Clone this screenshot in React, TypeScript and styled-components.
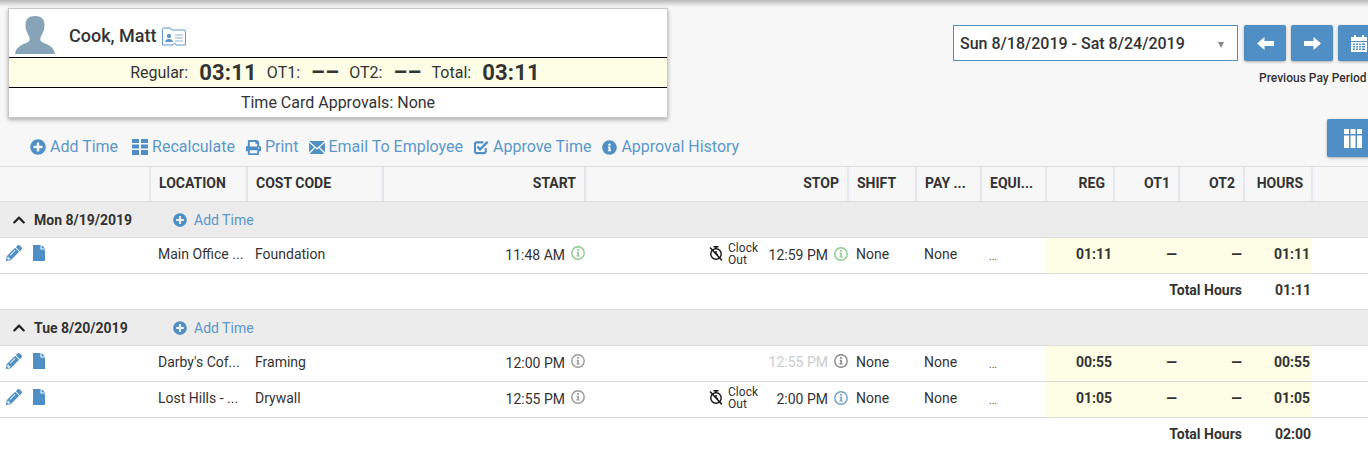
import React from 'react';
import styled, { createGlobalStyle } from 'styled-components';
import { FaPlusCircle, FaPrint, FaInfoCircle, FaPencilAlt, FaChevronUp } from 'react-icons/fa';

const Global = createGlobalStyle`
  html, body { margin: 0; padding: 0; height: 453px; overflow: hidden; background: #f7f7f7; }
  body { font-family: Roboto, "Liberation Sans", sans-serif; color: #333; font-size: 14px; }
`;

const Page = styled.div`
  width: 1368px;
  height: 453px;
  overflow: hidden;
  position: relative;
  &::before {
    content: '';
    position: absolute;
    left: 0; right: 0; top: 0; height: 7px;
    background: linear-gradient(#b8b8b8, #f7f7f7);
  }
`;

const TopBar = styled.div`
  display: flex;
  justify-content: space-between;
  padding: 8px 0 0 8px;
  height: 117px;
  box-sizing: border-box;
`;

const Card = styled.div`
  width: 660px;
  height: 110px;
  box-sizing: border-box;
  background: #fff;
  border: 1px solid #c8c8c8;
  box-shadow: 0 2px 4px rgba(0,0,0,.3);
  display: flex;
  flex-direction: column;
  position: relative;
`;

const CardHead = styled.div`
  height: 48px;
  flex: none;
  display: flex;
  align-items: flex-end;
  padding-left: 6px;
`;

const Name = styled.div`
  font-size: 18px;
  font-weight: 500;
  margin: 0 5px 9px 14px;
  line-height: 24px;
  color: #333;
`;

const IdIcon = styled.svg`
  width: 24px;
  height: 20px;
  margin-bottom: 10px;
`;

const Summary = styled.div`
  height: 31px;
  flex: none;
  box-sizing: border-box;
  background: #fefee6;
  border-top: 1px solid #000;
  border-bottom: 1px solid #000;
  display: flex;
  align-items: center;
  justify-content: center;
  font-size: 16px;
  padding-left: 4px;
`;

const SumLabel = styled.span`
  margin-right: 11px;
`;

const SumValue = styled.span`
  font-size: 22px;
  font-weight: 700;
  margin-right: 10px;
  letter-spacing: .2px;
`;

const Approvals = styled.div`
  flex: 1;
  display: flex;
  align-items: center;
  justify-content: center;
  font-size: 16px;
  padding-bottom: 1px;
`;

const Pay = styled.div`
  width: 415px;
  flex: none;
  padding-top: 17px;
  position: relative;
`;

const PayRow = styled.div`
  display: flex;
  gap: 5px;
`;

const Select = styled.div`
  width: 285px;
  height: 36px;
  flex: none;
  box-sizing: border-box;
  border: 1px solid #4f8fc6;
  background: #fff;
  display: flex;
  align-items: center;
  justify-content: space-between;
  padding: 0 13px 0 6px;
  font-size: 16px;
  font-weight: 500;
  margin-right: 1px;
`;

const Caret = styled.span`
  width: 0;
  height: 0;
  border-left: 3.5px solid transparent;
  border-right: 3.5px solid transparent;
  border-top: 6px solid #888;
  margin-top: 3px;
`;

const NavButton = styled.div`
  width: 42px;
  height: 36px;
  flex: none;
  background: #4f8fc6;
  border-radius: 2px;
  box-shadow: 0 1px 3px rgba(0,0,0,.3);
  color: #fff;
  display: flex;
  align-items: center;
  justify-content: center;
  font-size: 16px;
`;

const PrevLabel = styled.div`
  font-size: 12px;
  font-weight: 500;
  margin: 10px 0 0 306px;
  white-space: nowrap;
  line-height: 14px;
`;

const Toolbar = styled.div`
  height: 49px;
  display: flex;
  align-items: flex-start;
  justify-content: space-between;
  padding-left: 30px;
`;

const Actions = styled.div`
  display: flex;
  gap: 11px;
  margin-top: 18px;
  line-height: 24px;
  font-size: 16px;
  color: #5b97c9;
`;

const Action = styled.div<{ $shift?: number }>`
  display: flex;
  align-items: center;
  gap: 4px;
  white-space: nowrap;
  margin-left: ${p => p.$shift ?? 0}px;
  svg { fill: #4f8fc6; flex: none; }
`;

const ColumnsButton = styled.div`
  width: 52px;
  height: 38px;
  margin: 2px -11px 0 0;
  background: #4f8fc6;
  border-radius: 2px;
  box-shadow: 0 1px 3px rgba(0,0,0,.3);
  display: flex;
  align-items: center;
  padding-left: 17px;
  box-sizing: border-box;
`;

const COLS = '150px 97px 136px 202px 263px 68px 65px 65px 68px 65px 65px 68px 56px';

const HeadRow = styled.div`
  display: grid;
  grid-template-columns: ${COLS};
  height: 36px;
  box-sizing: border-box;
  border-top: 1px solid #ddd;
  border-bottom: 1px solid #ddd;
  background: #f7f7f7;
`;

const HeadCell = styled.div<{ $right?: boolean }>`
  border-right: 2px solid #e6e6ef;
  margin-right: -1px;
  box-sizing: border-box;
  font-size: 14px;
  font-weight: 700;
  line-height: 32px;
  padding: 0 8px 0 9px;
  text-align: ${p => (p.$right ? 'right' : 'left')};
  color: #333;
  white-space: nowrap;
  overflow: hidden;
`;

const Group = styled.div`
  height: 36px;
  box-sizing: border-box;
  background: #ececec;
  border-bottom: 1px solid #ddd;
  display: flex;
  align-items: center;
  padding: 0 0 0 12px;
`;

const GroupDate = styled.div`
  width: 139px;
  margin-left: 8px;
  font-weight: 700;
  font-size: 14px;
`;

const GroupAdd = styled.div`
  display: flex;
  align-items: center;
  gap: 7px;
  color: #5b97c9;
  svg { fill: #4f8fc6; }
`;

const Row = styled.div`
  display: grid;
  grid-template-columns: ${COLS};
  height: 36px;
  box-sizing: border-box;
  background: #fff;
  border-bottom: 1px solid #ddd;
`;

const Cell = styled.div<{ $hl?: boolean; $right?: boolean; $bold?: boolean; $flush?: boolean; $inset?: number }>`
  display: flex;
  align-items: flex-start;
  justify-content: ${p => (p.$right ? 'flex-end' : 'flex-start')};
  background: ${p => (p.$hl ? '#fefee6' : 'transparent')};
  font-weight: ${p => (p.$bold ? 700 : 400)};
  padding: 7px ${p => (p.$right && !p.$flush ? 2 : 0)}px 0 ${p => p.$inset ?? 8}px;
  line-height: 18px;
  white-space: nowrap;
  min-width: 0;
`;

const Tools = styled.div`
  display: flex;
  gap: 11px;
  padding: 0 0 0 6px;
  margin-top: 0;
  svg { fill: #4f8fc6; }
`;

const Dots = styled.span`
  font-size: 10px;
  line-height: 24px;
  color: #444;
`;

const TimeWrap = styled.div`
  display: flex;
  align-items: flex-start;
  gap: 6px;
  line-height: 18px;
`;

const Time = styled.span<{ $faded?: boolean }>`
  color: ${p => (p.$faded ? '#ccc' : '#333')};
  margin-top: ${p => (p.$faded ? 0 : 1)}px;
  min-width: 60px;
  text-align: right;
`;

const ClockOut = styled.div`
  display: flex;
  align-items: flex-start;
  gap: 5px;
  margin: -3px 10px 0 0;
  font-size: 12px;
  line-height: 12px;
  color: #333;
  svg { margin-top: 4px; }
`;

const Total = styled.div`
  display: grid;
  grid-template-columns: ${COLS};
  height: 36px;
  box-sizing: border-box;
  background: #fff;
  border-bottom: 1px solid #ddd;
  font-weight: 700;
`;

const TotalLabel = styled.div`
  grid-column: 1 / 12;
  text-align: right;
  padding: 7px 2px 0 0;
  line-height: 18px;
`;

const TotalValue = styled.div`
  grid-column: 12;
  text-align: right;
  padding: 7px 1px 0 0;
  line-height: 18px;
`;

const Person = () => (
  <svg width="40" height="38" viewBox="0 0 40 38" style={{ flex: 'none', marginBottom: 3 }}>
    <path fill="#87a3b8" d="M20 0c6 0 9.500 3 9.500 9 0 3-.5 5-1.500 7-1 2.500-2 4-2.500 5.500-.5 2 0 3.500 1.500 4.500 3 1.800 12 3.500 13 12H0c1-8.500 10-10.200 13-12 1.500-1 2-2.500 1.500-4.500C14 20 13 18.500 12 16c-1-2-1.500-4-1.500-7 0-6 3.500-9 9.500-9z" />
  </svg>
);

const IdCard = () => (
  <IdIcon viewBox="0 0 24 20">
    <path fill="none" stroke="#5b97c9" d="M.5 2.500a1.500 1.500 0 0 1 1.500-1.500h6l1.500 2h12a2 2 0 0 1 2 2v13h-9.500a1.500 1.500 0 0 0-3 0H.5z" />
    <circle cx="7" cy="9" r="2.200" fill="#5b97c9" />
    <path fill="#5b97c9" d="M3 15c0-2 2-3 4-3s4 1 4 3z" />
    <path stroke="#8fb4d4" d="M13 8h8M13 11h8M13 14h8" />
  </IdIcon>
);

const Recalc = () => (
  <svg width="16" height="16" viewBox="0 0 16 16">
    <path d="M0 0h7v4H0zM9 0h7v4H9zM0 5.500h7v4H0zM9 5.500h7v4H9zM0 11h7v5H0zM9 11h7v5H9z" />
  </svg>
);

const Mail = () => (
  <svg width="16" height="13" viewBox="0 0 17 14" style={{ marginRight: -1 }}>
    <path d="M0 0h17L8.500 7.500zM0 1.800v10.400L5.500 6.600zM17 1.800v10.400l-5.500-5.600zM6.500 7.500l2 1.800 2-1.800 6 6.500H.500z" />
  </svg>
);

const Approve = () => (
  <svg width="15" height="15" viewBox="0 0 16 15">
    <path fill="none" stroke="#4f8fc6" strokeWidth="2.200" d="M12.500 8v3.500a2 2 0 0 1-2 2H3a2 2 0 0 1-2-2V4a2 2 0 0 1 2-2h7" />
    <path fill="none" stroke="#4f8fc6" strokeWidth="2.600" d="M3.500 6.500l3 3L14.500 1.500" />
  </svg>
);

const Info = ({ color, low }: { color: string; low?: boolean }) => (
  <svg width="14" height="14" viewBox="0 0 14 14" style={{ flex: 'none', marginTop: low ? 2 : 1 }}>
    <circle cx="7" cy="7" r="6.200" fill="none" stroke={color} strokeWidth="1.400" />
    <path fill={color} d="M6.100 3h1.800v1.700H6.100zM5.500 5.800h2.400v3.700h.8v1H5.400v-1h.9V6.800h-.8z" />
  </svg>
);

const File = () => (
  <svg width="12" height="16" viewBox="0 0 12 16">
    <path d="M0 0h7.500v4.500H12V16H0zM8.500 0L12 3.500H8.500z" />
  </svg>
);

const NoClock = () => (
  <svg width="14" height="15" viewBox="0 0 14 15" style={{ flex: 'none' }}>
    <circle cx="7" cy="8" r="5.200" fill="none" stroke="#111" strokeWidth="1.400" />
    <path stroke="#111" strokeWidth="1.400" fill="none" d="M4.500 .8h5M7 1v2M1 1.500l12 13M7 5v3l2 1" />
  </svg>
);

const Arrow = ({ flip }: { flip?: boolean }) => (
  <svg width="17" height="13" viewBox="0 0 17 13" style={{ transform: flip ? 'scaleX(-1)' : undefined }}>
    <path fill="#fff" d="M0 6.500L7.500 0v4H17v5H7.500v4z" />
  </svg>
);

const Calendar = () => (
  <svg width="16" height="17" viewBox="0 0 16 17">
    <path fill="#fff" d="M0 2h3V0h2v2h6V0h2v2h3v4H0z" />
    <path fill="#fff" fillRule="evenodd" d="M0 7h16v10H0zm2 1.500V10h2V8.500zm3 0V10h2V8.500zm3 0V10h2V8.500zm3 0V10h3V8.500zM2 11v1.500h2V11zm3 0v1.500h2V11zm3 0v1.500h2V11zm3 0v1.500h3V11zm-9 2.500V15h2v-1.500zm3 0V15h2v-1.500zm3 0V15h2v-1.500zm3 0V15h3v-1.500z" />
  </svg>
);

const ColumnsIcon = () => (
  <svg width="18" height="19" viewBox="0 0 18 19">
    <path fill="#fff" d="M0 0h5v5H0zM6.500 0h5v5h-5zM13 0h5v5h-5zM0 6.500h5V19H0zM6.500 6.500h5V19h-5zM13 6.500h5V19h-5z" />
  </svg>
);

type Entry = {
  location: string;
  code: string;
  start: string;
  startInfo: string;
  stop: string;
  stopInfo: string;
  faded?: boolean;
  clockOut?: boolean;
  reg: string;
};

const Entries = ({ e }: { e: Entry }) => (
  <Row>
    <Cell $inset={0}>
      <Tools>
        <FaPencilAlt size={16} />
        <File />
      </Tools>
    </Cell>
    <Cell>{e.location}</Cell>
    <Cell $inset={8}>{e.code}</Cell>
    <Cell $right $flush $inset={0}>
      <TimeWrap><Time>{e.start}</Time><Info color={e.startInfo} /></TimeWrap>
    </Cell>
    <Cell $right $flush $inset={0}>
      {e.clockOut && (
        <ClockOut><NoClock /><span>Clock<br />Out</span></ClockOut>
      )}
      <TimeWrap><Time $faded={e.faded}>{e.stop}</Time><Info color={e.stopInfo} low={e.clockOut} /></TimeWrap>
    </Cell>
    <Cell>None</Cell>
    <Cell>None</Cell>
    <Cell><Dots>...</Dots></Cell>
    <Cell $hl $right $bold>{e.reg}</Cell>
    <Cell $hl $right $bold>—</Cell>
    <Cell $hl $right $bold>—</Cell>
    <Cell $hl $right $bold>{e.reg}</Cell>
    <Cell />
  </Row>
);

const DayHead = ({ date }: { date: string }) => (
  <Group>
    <FaChevronUp size={14} color="#222" />
    <GroupDate>{date}</GroupDate>
    <GroupAdd><FaPlusCircle size={14} /><span>Add Time</span></GroupAdd>
  </Group>
);

const TotalRow = ({ value }: { value: string }) => (
  <Total>
    <TotalLabel>Total Hours</TotalLabel>
    <TotalValue>{value}</TotalValue>
  </Total>
);

const heads: [string, boolean][] = [
  ['', false], ['LOCATION', false], ['COST CODE', false], ['START', true], ['STOP', true], ['SHIFT', false],
  ['PAY ...', false], ['EQUI...', false], ['REG', true], ['OT1', true], ['OT2', true], ['HOURS', true],
];

export default function App() {
  return (
    <Page>
      <Global />
      <TopBar>
        <Card>
          <CardHead>
            <Person />
            <Name>Cook, Matt</Name>
            <IdCard />
          </CardHead>
          <Summary>
            <SumLabel>Regular:</SumLabel><SumValue>03:11</SumValue>
            <SumLabel>OT1:</SumLabel><SumValue>––</SumValue>
            <SumLabel>OT2:</SumLabel><SumValue>––</SumValue>
            <SumLabel>Total:</SumLabel><SumValue>03:11</SumValue>
          </Summary>
          <Approvals>Time Card Approvals: None</Approvals>
        </Card>
        <Pay>
          <PayRow>
            <Select>Sun 8/18/2019 - Sat 8/24/2019<Caret /></Select>
            <NavButton><Arrow /></NavButton>
            <NavButton><Arrow flip /></NavButton>
            <NavButton><Calendar /></NavButton>
          </PayRow>
          <PrevLabel>Previous Pay Period</PrevLabel>
        </Pay>
      </TopBar>
      <Toolbar>
        <Actions>
          <Action><FaPlusCircle size={16} />Add Time</Action>
          <Action $shift={3}><Recalc />Recalculate</Action>
          <Action><FaPrint size={15} />Print</Action>
          <Action><Mail />Email To Employee</Action>
          <Action><Approve />Approve Time</Action>
          <Action><FaInfoCircle size={15} />Approval History</Action>
        </Actions>
        <ColumnsButton><ColumnsIcon /></ColumnsButton>
      </Toolbar>
      <HeadRow>
        {heads.map(([t, r], i) => <HeadCell key={i} $right={r}>{t}</HeadCell>)}
      </HeadRow>
      <DayHead date="Mon 8/19/2019" />
      <Entries e={{ location: 'Main Office ...', code: 'Foundation', start: '11:48 AM', startInfo: '#8cc98c', stop: '12:59 PM', stopInfo: '#8cc98c', clockOut: true, reg: '01:11' }} />
      <TotalRow value="01:11" />
      <DayHead date="Tue 8/20/2019" />
      <Entries e={{ location: "Darby's Cof...", code: 'Framing', start: '12:00 PM', startInfo: '#999', stop: '12:55 PM', stopInfo: '#888', faded: true, reg: '00:55' }} />
      <Entries e={{ location: 'Lost Hills - ...', code: 'Drywall', start: '12:55 PM', startInfo: '#999', stop: '2:00 PM', stopInfo: '#6f9fcb', clockOut: true, reg: '01:05' }} />
      <TotalRow value="02:00" />
    </Page>
  );
}
